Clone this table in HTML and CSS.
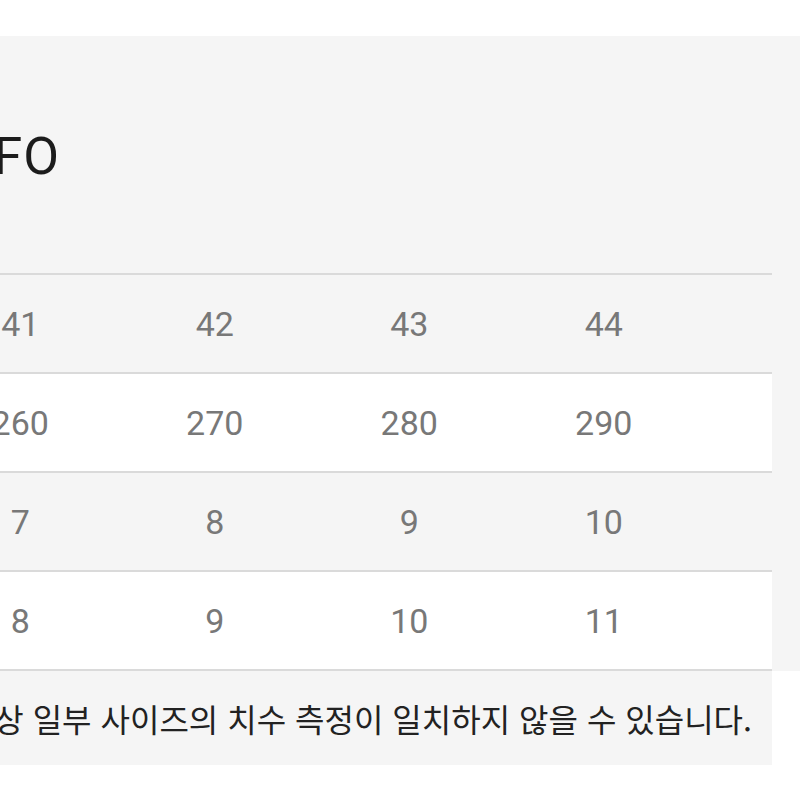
FILE: index.html
```html
<!DOCTYPE html>
<html lang="ko">
<head>
<meta charset="utf-8">
<title>Size Info</title>
<link rel="stylesheet" href="styles.css">
</head>
<body>
<div class="page">
  <section class="panel">
    <div class="title-wrap"><h1 class="title">SIZE INFO</h1></div>
    <div class="table">
      <div class="row row-gray">
        <div class="cell">41</div><div class="cell">42</div><div class="cell">43</div><div class="cell">44</div><div class="cell"></div>
      </div>
      <div class="row row-white">
        <div class="cell">260</div><div class="cell">270</div><div class="cell">280</div><div class="cell">290</div><div class="cell"></div>
      </div>
      <div class="row row-gray">
        <div class="cell">7</div><div class="cell">8</div><div class="cell">9</div><div class="cell">10</div><div class="cell"></div>
      </div>
      <div class="row row-white row-last">
        <div class="cell">8</div><div class="cell">9</div><div class="cell">10</div><div class="cell">11</div><div class="cell"></div>
      </div>
    </div>
  </section>
  <div class="note"><p class="note-text">※ 제조 공정상 일부 사이즈의 치수 측정이 일치하지 않을 수 있습니다.</p></div>
</div>
</body>
</html>
```

FILE: styles.css
```css
* { box-sizing: border-box; }
html, body { margin: 0; padding: 0; background: #ffffff; }
body { font-family: Roboto, "Noto Sans", "Noto Sans CJK KR", sans-serif; }
.page { padding-top: 36px; overflow: hidden; }
.panel { background: #f5f5f5; padding-top: 95px; }
.title-wrap { display: flex; justify-content: flex-end; width: 60px; height: 52px; margin-bottom: 90px; }
.title { margin: 0; font-size: 52px; line-height: 52px; font-weight: 400; color: #1c1c1c; white-space: nowrap; letter-spacing: 1px; }
.table { margin-left: -77px; width: 849px; }
.row { display: grid; grid-template-columns: repeat(4, 194.5px) 1fr; height: 99px; border-top: 2px solid #dadada; }
.row-last { height: 101px; border-bottom: 2px solid #dadada; }
.row-gray { background: #f5f5f5; }
.row-white { background: #ffffff; }
.cell { display: flex; align-items: center; justify-content: center; font-size: 34px; color: #787878; }
.note { width: 772px; height: 94px; background: #f5f5f5; display: flex; align-items: center; justify-content: flex-end; padding-right: 20px; }
.note-text { margin: 0; white-space: nowrap; font-family: "Noto Sans CJK KR", sans-serif; font-size: 32px; color: #222222; }
```
